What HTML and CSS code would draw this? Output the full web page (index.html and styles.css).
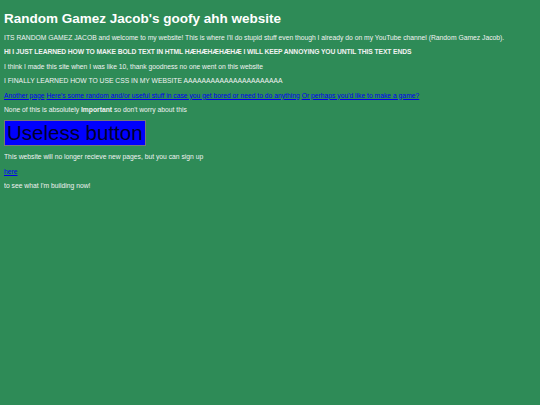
FILE: index.html
```html
<!DOCTYPE html>
<html>
<head>
<meta charset="utf-8">
<title>Random Gamez Jacob's goofy ahh website</title>
<link rel="stylesheet" href="styles.css">
</head>
<body>
<h1 class="title">Random Gamez Jacob's goofy ahh website</h1>
<p class="text">ITS RANDOM GAMEZ JACOB and welcome to my website! This is where I'll do stupid stuff even though I already do on my YouTube channel (Random Gamez Jacob).</p>
<p class="text"><b class="loud">HI I JUST LEARNED HOW TO MAKE BOLD TEXT IN HTML HÆHÆHÆHÆHÆ I WILL KEEP ANNOYING YOU UNTIL THIS TEXT ENDS</b></p>
<p class="text">I think I made this site when I was like 10, thank goodness no one went on this website</p>
<p class="text">I FINALLY LEARNED HOW TO USE CSS IN MY WEBSITE AAAAAAAAAAAAAAAAAAAAAA</p>
<p class="text"><a class="link" href="#">Another page</a> <a class="link" href="#">Here's some random and/or useful stuff in case you get bored or need to do anything</a> <a class="link" href="#">Or perhaps you'd like to make a game?</a></p>
<p class="text">None of this is absolutely <b>Important</b> so don't worry about this</p>
<button class="useless">Useless button</button>
<p class="text">This website will no longer recieve new pages, but you can sign up</p>
<p class="text"><a class="link" href="#">here</a></p>
<p class="text">to see what I'm building now!</p>
</body>
</html>
```
FILE: styles.css
```css
html {
  background: #2e8b57;
}
body {
  margin: 4px;
  font-family: "Liberation Sans", Arial, sans-serif;
  color: #f2f2f2;
}
.title {
  font-size: 13.5px;
  line-height: 16px;
  font-weight: bold;
  color: #ffffff;
  margin: 7px 0 7px 0;
}
.text {
  font-size: 6.75px;
  line-height: 8px;
  margin: 6.4px 0;
}
.loud {
  letter-spacing: -0.12px;
}
.link {
  color: #0000ee;
}
.useless {
  display: block;
  font-family: "Liberation Sans", Arial, sans-serif;
  font-size: 20.5px;
  background: #0000ff;
  color: #00002a;
  border: 1px solid #777777;
  padding: 0 2px;
  margin: 4px 0 7px 0;
  line-height: 24px;
}
```
